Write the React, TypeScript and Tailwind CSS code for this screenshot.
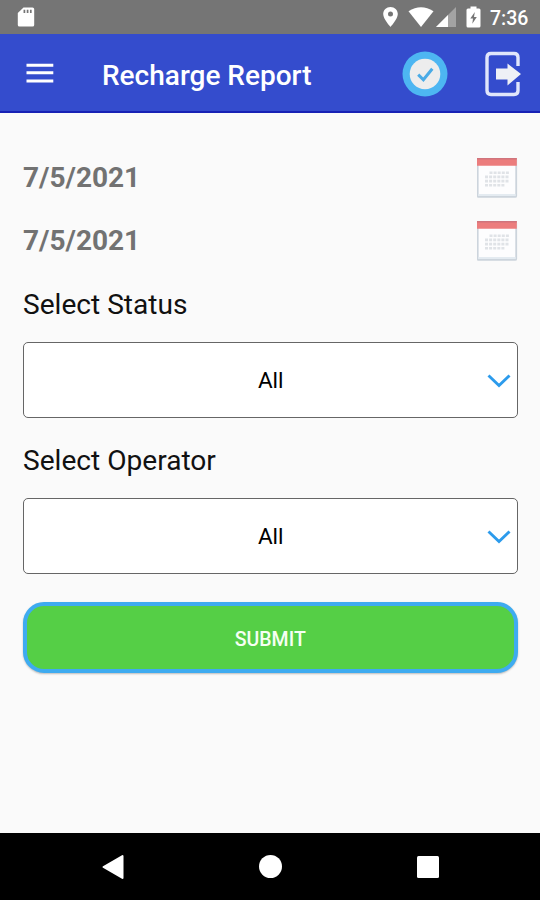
import React from "react";

const StatusBar: React.FC = () => (
  <div className="flex h-[34px] shrink-0 items-center bg-[#757575] pl-[17px] pr-[11px] text-white">
    <svg width="18" height="20" viewBox="0 0 18 20" className="mr-auto">
      <path
        d="M6.5 0.5H15.5Q17.2 0.5 17.2 2V18Q17.2 19.6 15.5 19.6H2.5Q0.8 19.6 0.8 18V6Z"
        fill="#fff"
      />
      <path d="M7.4 2.8V6M10.6 2.8V6M13.8 2.8V6" stroke="#757575" strokeWidth="1.7" />
    </svg>
    <svg width="15" height="20" viewBox="0 0 15 20" className="mr-[10px]">
      <path
        d="M7.5 0C3.4 0 0.2 3.1 0.2 7.1C0.2 12.2 7.5 20 7.5 20S14.8 12.2 14.8 7.1C14.8 3.1 11.6 0 7.5 0ZM7.5 4.6A2.5 2.5 0 1 1 7.5 9.6A2.5 2.5 0 1 1 7.5 4.6Z"
        fill="#fff"
        fillRule="evenodd"
      />
    </svg>
    <svg width="26" height="20" viewBox="0 0 26 20" className="mr-[2px]">
      <path d="M0.5 4.2Q13 -3.8 25.5 4.2L13 20Z" fill="#fff" />
    </svg>
    <svg width="20" height="20" viewBox="0 0 20 20" className="mr-[10px]">
      <path d="M20 0V20H0Z" fill="#a3a3a3" />
      <path d="M12 8V20H0Z" fill="#fff" />
    </svg>
    <svg width="15" height="22" viewBox="0 0 15 22" className="mr-[9px]">
      <path
        d="M4.5 0.5H10.5V2.5H13Q14.5 2.5 14.5 4V20Q14.5 21.5 13 21.5H2Q0.5 21.5 0.5 20V4Q0.5 2.5 2 2.5H4.5Z"
        fill="#fff"
      />
      <path d="M8.8 6L4.3 12.6H7L6.3 17.8L10.8 11.1H8Z" fill="#757575" />
    </svg>
    <span className="w-[39px] whitespace-nowrap pt-[3px] text-[19.5px] font-medium leading-5">
      7:36
    </span>
  </div>
);

const Header: React.FC = () => (
  <header className="flex h-[79px] shrink-0 items-center border-b-2 border-[#1822b5] bg-[#344ccd] pl-[26px] pr-[18px] pt-[2px]">
    <button aria-label="Menu">
      <svg width="28" height="22" viewBox="0 0 28 22" className="block">
        <path d="M0.5 2.3H27.3M0.5 9.8H27.3M0.5 18H27.3" stroke="#fff" strokeWidth="3" />
      </svg>
    </button>
    <h1 className="ml-[48px] mr-auto pt-[5px] text-[28px] font-medium leading-8 text-white">
      Recharge Report
    </h1>
    <svg width="46" height="46" viewBox="0 0 46 46" className="mr-[37px]">
      <circle cx="23" cy="23" r="22.5" fill="#4db6f2" />
      <circle cx="23" cy="23" r="15.3" fill="#ededed" />
      <path d="M16.2 23.6L21.4 28.7L30.3 17.8" fill="none" stroke="#4aabe6" strokeWidth="3" />
    </svg>
    <svg width="37" height="46" viewBox="0 0 37 46">
      <path
        d="M33 15V6.5Q33 2.5 29 2.5H6Q2 2.5 2 6.5V39.5Q2 43.5 6 43.5H29Q33 43.5 33 39.5V31"
        fill="none"
        stroke="#e0e6fb"
        strokeWidth="3.4"
      />
      <path d="M11 17.5H22.5V12.5L36 23L22.5 34.5V28.5H11Z" fill="#eef0f6" />
    </svg>
  </header>
);

const CalendarIcon: React.FC = () => (
  <svg width="41" height="41" viewBox="0.5 -0.7 41 41">
    <rect x="1.2" y="1.2" width="38.5" height="38" rx="1" fill="#fdfdfe" stroke="#ccd4dc" strokeWidth="1.8" />
    <path d="M2 37.3H39" stroke="#e4ebf1" strokeWidth="2" />
    <path d="M0.5 1Q0.5 0.3 1.5 0.3H39.5Q40.3 0.3 40.3 1V8H0.5Z" fill="#ec7d7d" />
    <path d="M0.5 1H40.3" stroke="#d0747c" strokeWidth="1.4" />
    <path d="M13 15H33M8.5 19.2H33M8.5 23.4H33M8.5 27.6H29" stroke="#e0e3e7" strokeWidth="2.6" strokeDasharray="3 1.1" />
  </svg>
);

const DateRow: React.FC<{ date: string }> = ({ date }) => (
  <button className="flex h-[63px] w-full items-center justify-between">
    <span className="text-[28px] font-bold leading-8 text-[#727272]">{date}</span>
    <CalendarIcon />
  </button>
);

const SelectField: React.FC<{ label: string; value: string }> = ({ label, value }) => (
  <div className="flex h-[156px] flex-col">
    <div className="h-[53px] text-[28.1px] leading-8 text-[#111]">{label}</div>
    <button className="relative flex h-[76px] w-full items-center justify-center rounded-[5px] border-[1.5px] border-[#666] bg-white pl-[1px] pt-[1px] text-[22.5px] text-black">
      {value}
      <svg width="24" height="14" viewBox="0 0 24 14" className="absolute right-[6px] top-[31px]">
        <path d="M1.5 1.5L12 11.5L22.5 1.5" fill="none" stroke="#2c9bec" strokeWidth="2.9" />
      </svg>
    </button>
  </div>
);

const NavigationBar: React.FC = () => (
  <nav className="flex h-[67px] shrink-0 items-center justify-between bg-black pl-[102px] pr-[101.5px]">
    <svg width="22" height="26" viewBox="0 0 22 26">
      <path d="M1.5 13L20.5 2V24Z" fill="#fff" stroke="#fff" strokeWidth="2" strokeLinejoin="round" />
    </svg>
    <span className="size-[23px] rounded-full bg-white" />
    <span className="size-[22px] rounded-[1.5px] bg-white" />
  </nav>
);

const App: React.FC = () => {
  return (
    <div className="flex h-[900px] w-[540px] flex-col overflow-hidden bg-[#fafafa] font-[Roboto,sans-serif]">
      <StatusBar />
      <Header />
      <main className="flex min-h-0 flex-1 flex-col pl-[23px] pr-[22.5px] pt-[33px]">
        <DateRow date="7/5/2021" />
        <DateRow date="7/5/2021" />
        <div className="pt-[17px]">
          <SelectField label="Select Status" value="All" />
          <SelectField label="Select Operator" value="All" />
        </div>
        <button className="mt-px h-[71px] w-full shrink-0 rounded-[21px] border-4 border-[#3eabf0] bg-[#55cf46] pt-[5px] text-[19.5px] font-medium text-[#f5fff3] shadow-[0_1px_2px_rgba(0,0,0,0.25)]">
          SUBMIT
        </button>
      </main>
      <NavigationBar />
    </div>
  );
};

export default App;
